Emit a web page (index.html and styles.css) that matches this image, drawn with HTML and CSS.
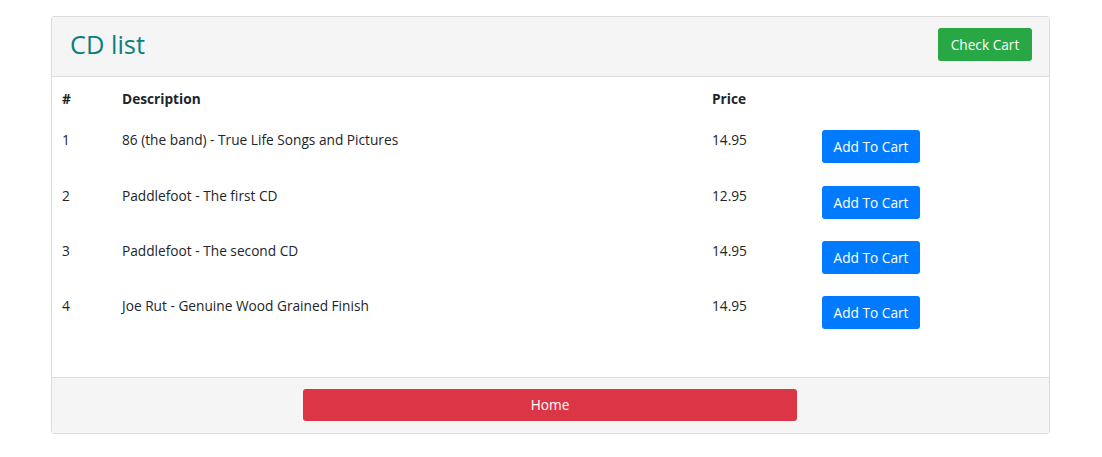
FILE: index.html
```html
<!DOCTYPE html>
<html>
<head>
<meta charset="utf-8">
<link rel="stylesheet" href="styles.css">
</head>
<body>
<div class="card">
  <div class="card-header">
    <h1 class="title">CD list</h1>
    <button class="btn btn-green">Check Cart</button>
  </div>
  <div class="card-body">
    <table class="cds">
      <thead>
        <tr><th class="c-num">#</th><th class="c-desc">Description</th><th class="c-price">Price</th><th class="c-act"></th></tr>
      </thead>
      <tbody>
        <tr><td>1</td><td>86 (the band) - True Life Songs and Pictures</td><td>14.95</td><td><button class="btn btn-blue">Add To Cart</button></td></tr>
        <tr><td>2</td><td>Paddlefoot - The first CD</td><td>12.95</td><td><button class="btn btn-blue">Add To Cart</button></td></tr>
        <tr><td>3</td><td>Paddlefoot - The second CD</td><td>14.95</td><td><button class="btn btn-blue">Add To Cart</button></td></tr>
        <tr><td>4</td><td>Joe Rut - Genuine Wood Grained Finish</td><td>14.95</td><td><button class="btn btn-blue">Add To Cart</button></td></tr>
      </tbody>
    </table>
  </div>
  <div class="card-footer">
    <button class="btn btn-red">Home</button>
  </div>
</div>
</body>
</html>
```

FILE: styles.css
```css
html, body {
  margin: 0;
  padding: 0;
  background: #fff;
}
body {
  font-family: "Open Sans", "Noto Sans", sans-serif;
  font-size: 13.7px;
  color: #212529;
  padding-top: 16px;
}
.card {
  width: 997px;
  margin: 0 0 0 51px;
  border: 1px solid #dcdcdc;
  border-radius: 3px;
  background: #fff;
}
.card-header {
  display: flex;
  align-items: flex-start;
  justify-content: space-between;
  background: #f5f5f5;
  border-bottom: 1px solid #dcdcdc;
  height: 60px;
  padding: 11px 17px 0 18px;
  box-sizing: border-box;
}
.title {
  margin: 0;
  font-size: 25.4px;
  line-height: 33px;
  font-weight: 400;
  color: #0b7f7f;
}
.btn {
  font-family: inherit;
  font-size: 13.7px;
  color: #fff;
  border: none;
  border-radius: 3px;
  padding: 0;
  height: 33px;
  cursor: pointer;
}
.btn-green { background: #28a745; width: 94px; }
.btn-blue { background: #007bff; width: 98px; }
.btn-red { background: #dc3545; width: 494px; height: 32px; }
.card-body {
  padding: 1px 0 36px;
}
.cds {
  width: 100%;
  border-collapse: collapse;
}
.cds th, .cds td {
  text-align: left;
  vertical-align: top;
  padding: 11px 10px 10px 10px;
  line-height: 20px;
}
.cds th { font-weight: 700; }
.cds tbody td { padding-top: 11.2px; padding-bottom: 11.2px; }
.c-num { width: 40px; }
.c-desc { width: 570px; }
.c-price { width: 90px; }
.card-footer {
  background: #f5f5f5;
  border-top: 1px solid #dcdcdc;
  display: flex;
  justify-content: center;
  padding: 11px 1px 12px 0;
}
```
